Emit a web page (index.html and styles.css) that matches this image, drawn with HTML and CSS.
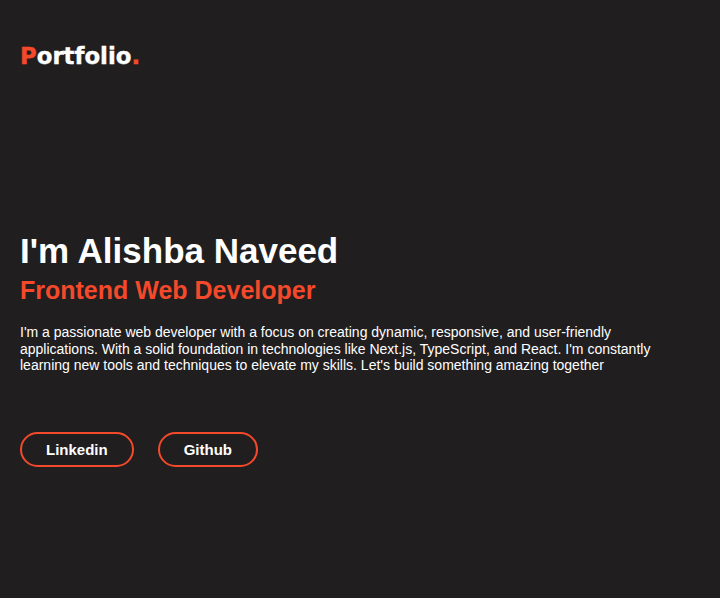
FILE: index.html
```html
<!DOCTYPE html>
<html lang="en">
<head>
<meta charset="utf-8">
<title>Portfolio</title>
<link rel="stylesheet" href="styles.css">
</head>
<body>
  <header class="header">
    <div class="logo"><span class="accent">P</span>ortfolio<span class="accent">.</span></div>
  </header>
  <main class="hero">
    <h1 class="hero-title">I'm Alishba Naveed</h1>
    <h2 class="hero-subtitle">Frontend Web Developer</h2>
    <p class="hero-text">I'm a passionate web developer with a focus on creating dynamic, responsive, and user-friendly applications. With a solid foundation in technologies like Next.js, TypeScript, and React. I'm constantly learning new tools and techniques to elevate my skills. Let's build something amazing together</p>
    <div class="hero-actions">
      <a class="btn" href="#">Linkedin</a>
      <a class="btn" href="#">Github</a>
    </div>
  </main>
</body>
</html>
```

FILE: styles.css
```css
html, body {
  margin: 0;
  padding: 0;
  background: #201e1f;
  min-height: 100%;
}
body {
  font-family: "Liberation Sans", Arial, sans-serif;
  color: #ffffff;
}
.header {
  padding: 43px 20px 0;
}
.logo {
  font-family: "DejaVu Sans", Verdana, sans-serif;
  font-weight: bold;
  font-size: 22.8px;
  -webkit-text-stroke: 0.4px currentColor;
  color: #ffffff;
}
.accent {
  color: #f4492a;
}
.hero {
  padding: 0 20px;
  margin-top: 162px;
}
.hero-title {
  margin: 0;
  font-size: 35px;
  line-height: 40px;
  font-weight: bold;
}
.hero-subtitle {
  margin: 5px 0 0;
  font-size: 25px;
  font-weight: bold;
  color: #f4492a;
}
.hero-text {
  margin: 19px 0 0;
  font-size: 14px;
  line-height: 16.5px;
  max-width: 650px;
}
.hero-actions {
  display: flex;
  gap: 24px;
  margin-top: 58px;
}
.btn {
  display: inline-block;
  padding: 7px 24px;
  border: 2px solid #f4492a;
  border-radius: 999px;
  color: #ffffff;
  font-weight: bold;
  font-size: 15px;
  line-height: 17px;
  text-decoration: none;
}
```
